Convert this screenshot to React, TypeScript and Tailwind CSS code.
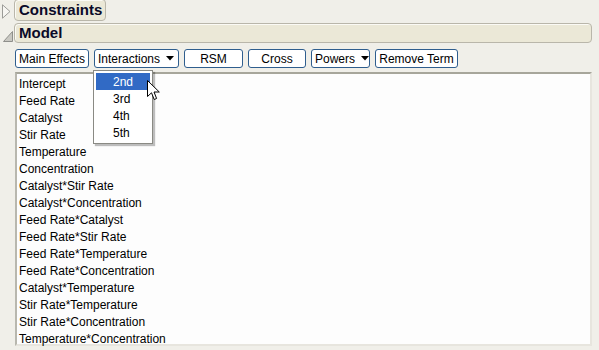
import { ReactNode } from 'react';

// Model dialog: outline headers, term buttons, effects list with open Interactions menu

const TERMS = [
  'Intercept',
  'Feed Rate',
  'Catalyst',
  'Stir Rate',
  'Temperature',
  'Concentration',
  'Catalyst*Stir Rate',
  'Catalyst*Concentration',
  'Feed Rate*Catalyst',
  'Feed Rate*Stir Rate',
  'Feed Rate*Temperature',
  'Feed Rate*Concentration',
  'Catalyst*Temperature',
  'Stir Rate*Temperature',
  'Stir Rate*Concentration',
  'Temperature*Concentration',
];

const ORDERS = ['2nd', '3rd', '4th', '5th'];

function Caret() {
  return (
    <svg width="8" height="5" viewBox="0 0 8 5" className="ml-[6px]">
      <path d="M0 0h8L4 4.5z" fill="#000" />
    </svg>
  );
}

function Btn({ w, children, menu }: { w: string; children: ReactNode; menu?: boolean }) {
  return (
    <div
      className={`${w} h-[19px] flex items-center ${menu ? 'pl-[3px]' : 'justify-center'} bg-white border border-[#2f5e8e] rounded-[3px] text-[12px] leading-none text-black`}
    >
      {children}
      {menu && <Caret />}
    </div>
  );
}

export default function App() {
  return (
    <div
      className="relative w-[599px] h-[350px] overflow-hidden bg-[#f0efe9]"
      style={{ fontFamily: '"Liberation Sans", Arial, sans-serif' }}
    >
      {/* Constraints outline header (collapsed) */}
      <div className="flex h-[22px] -mt-[1px]">
        <div className="w-[14px] flex items-center pl-[2px] pt-[2px]">
          <svg width="9" height="15" viewBox="0 0 9 15">
            <path d="M0.5 0.8L8 7.5L0.5 14.2z" fill="#f7f6f2" stroke="#9c9c98" />
          </svg>
        </div>
        <div className="w-[92px] h-[22px] flex items-center pl-[4px] bg-[#ebe8d7] border border-[#b9b6aa] rounded-[4px] shadow-[inset_1px_1px_0_#fbfaf5]">
          <span className="text-[15px] font-bold text-[#0a0a28]">Constraints</span>
        </div>
      </div>

      {/* Model outline header (open) */}
      <div className="flex h-[20px] mt-[2px]">
        <div className="w-[14px] flex items-end pl-[3px] pb-[1px]">
          <svg width="10" height="11" viewBox="0 0 10 11">
            <path d="M9.5 0.5V10.5H0.5z" fill="#c9c8c2" stroke="#8f8f8b" />
          </svg>
        </div>
        <div className="w-[578px] h-[20px] flex items-center pl-[4px] bg-[#ebe8d7] border border-[#b9b6aa] rounded-[4px] shadow-[inset_1px_1px_0_#fbfaf5]">
          <span className="text-[15px] font-bold text-[#0a0a28]">Model</span>
        </div>
      </div>

      {/* Buttons */}
      <div className="flex items-center gap-[5px] ml-[15px] mt-[6px]">
        <Btn w="w-[74px]">Main Effects</Btn>
        <Btn w="w-[85px]" menu>
          Interactions
        </Btn>
        <Btn w="w-[59px]">RSM</Btn>
        <Btn w="w-[58px]">Cross</Btn>
        <Btn w="w-[59px]" menu>
          Powers
        </Btn>
        <Btn w="w-[83px]">Remove Term</Btn>
      </div>

      {/* Effects list */}
      <div className="ml-[15px] mt-[4px] w-[577px] h-[274px] bg-[#fdfdfd] border-t-2 border-l-2 border-t-[#a7a69b] border-l-[#b8b7ae] border-r-2 border-b-2 border-r-[#e7e5de] border-b-[#e7e5de] pt-[1px] pl-[2px]">
        {TERMS.map((t) => (
          <div key={t} className="h-[17px] flex items-center text-[12px] text-black leading-none">
            {t}
          </div>
        ))}
      </div>

      {/* Interactions dropdown menu */}
      <div className="absolute left-[93px] top-[70px] w-[60px] p-[2px] bg-white border border-[#8a8a84] shadow-[2px_2px_1px_rgba(0,0,0,0.25)]">
        {ORDERS.map((o, i) => (
          <div
            key={o}
            className={`h-[17px] flex items-center pl-[17px] text-[12px] leading-none ${i === 0 ? 'bg-[#316ac5] text-white' : 'text-black'}`}
          >
            {o}
          </div>
        ))}
      </div>

      {/* Mouse pointer */}
      <svg className="absolute left-[147px] top-[80px]" width="13" height="21" viewBox="0 0 13 21">
        <path
          d="M0.5 0.5V16.5L4.5 12.8L7.2 19.5L9.6 18.5L7 12H12.3z"
          fill="#fff"
          stroke="#000"
          strokeLinejoin="miter"
        />
      </svg>
    </div>
  );
}
